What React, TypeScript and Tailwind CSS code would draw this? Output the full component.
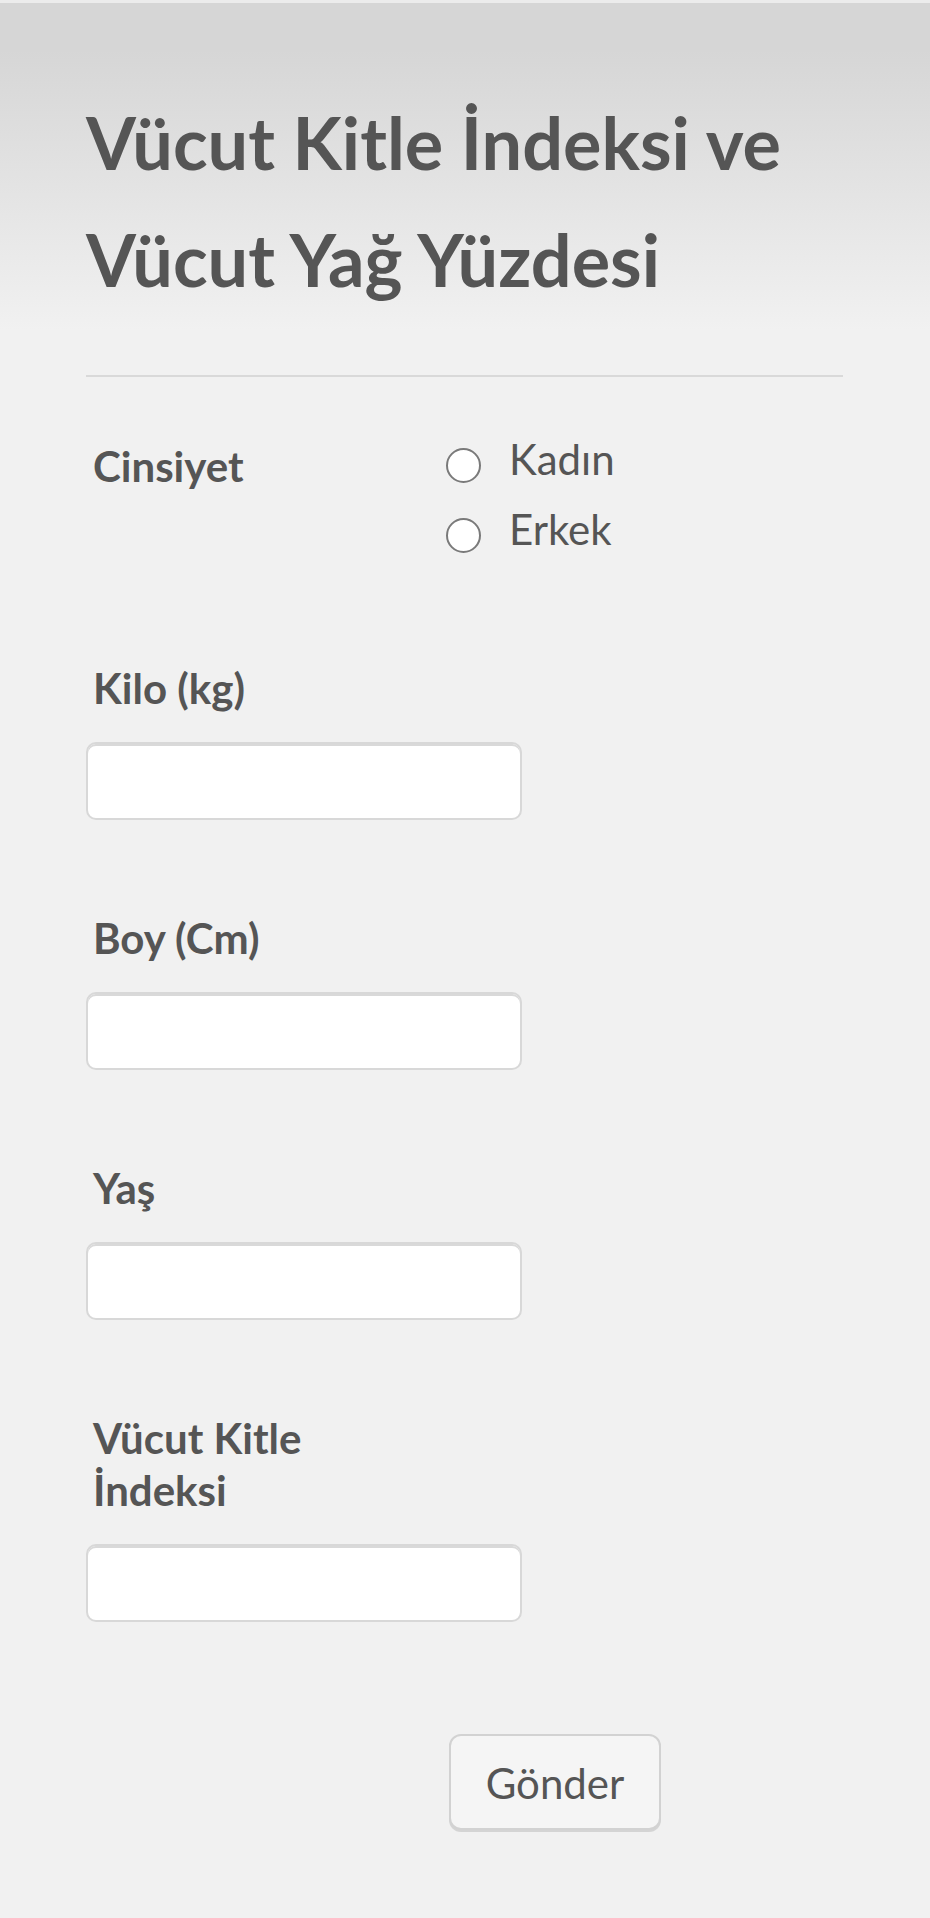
import { useState } from 'react';

const inputCls =
  'block w-[436px] h-[78px] rounded-[10px] border-2 border-[#d8d8d8] bg-white shadow-[inset_0_2px_0_#d9d9d9] outline-none px-3 text-[32px] text-[#555]';

function Field({ label, narrow }: { label: string; narrow?: boolean }) {
  const [value, setValue] = useState('');
  return (
    <div>
      <label className={`block pl-[7px] text-[42px] leading-[52px] font-bold text-[#555] ${narrow ? 'w-[300px]' : ''}`}>
        {label}
      </label>
      <input
        type="text"
        value={value}
        onChange={(e) => setValue(e.target.value)}
        className={`${inputCls} mt-[28px]`}
      />
    </div>
  );
}

export default function App() {
  const [gender, setGender] = useState('');

  return (
    <div className="min-h-[1918px] w-[930px] font-['Lato',sans-serif] bg-[linear-gradient(to_bottom,#ececec_0px,#ececec_3px,#d6d6d6_3px,#d6d6d6_50px,#f1f1f1_330px,#f1f1f1_100%)]">
      <div className="pl-[86px] w-[843px]">
        <h1 className="pt-[84px] text-[72px] leading-[117px] font-bold text-[#555]">
          Vücut Kitle İndeksi ve Vücut Yağ Yüzdesi
        </h1>
        <div className="mt-[57px] h-[2px] w-[757px] bg-[#d9d9d9]" />

        <div className="mt-[56px] flex w-[757px]">
          <div className="w-[360px] pl-[7px] pt-[7px] text-[42px] leading-[52px] font-bold text-[#555]">
            Cinsiyet
          </div>
          <div className="flex flex-col gap-[18px]">
            {['Kadın', 'Erkek'].map((g) => (
              <label key={g} className="flex items-start gap-[28px] cursor-pointer">
                <span
                  onClick={() => setGender(g)}
                  className="mt-[15px] flex h-[35px] w-[35px] items-center justify-center rounded-full border-2 border-[#7a7a7a] bg-white"
                >
                  {gender === g && <span className="h-[17px] w-[17px] rounded-full bg-[#555]" />}
                </span>
                <span onClick={() => setGender(g)} className="text-[42px] leading-[52px] text-[#555]">
                  {g}
                </span>
              </label>
            ))}
          </div>
        </div>

        <div className="mt-[107px] flex flex-col gap-[92px]">
          <Field label="Kilo (kg)" />
          <Field label="Boy (Cm)" />
          <Field label="Yaş" />
          <Field label="Vücut Kitle İndeksi" narrow />
        </div>

        <div className="mt-[112px] pl-[363px]">
          <button
            type="button"
            className="h-[96px] w-[212px] rounded-[12px] border-2 border-[#d2d2d2] bg-[#f5f5f5] shadow-[0_2px_0_#d4d4d4] pt-[3px] text-[42px] text-[#555] cursor-pointer"
          >
            Gönder
          </button>
        </div>
      </div>
    </div>
  );
}
